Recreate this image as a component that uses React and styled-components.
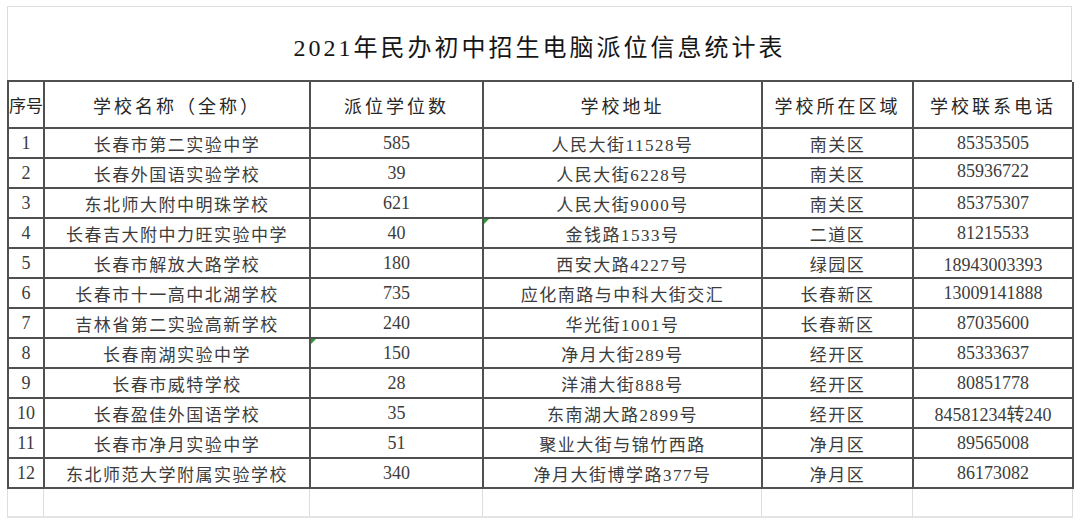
import * as React from "react";
import styled, {createGlobalStyle} from "styled-components";

const rows = [
  [1, "长春市第二实验中学", 585, "人民大街11528号", "南关区", "85353505"],
  [2, "长春外国语实验学校", 39, "人民大街6228号", "南关区", "85936722"],
  [3, "东北师大附中明珠学校", 621, "人民大街9000号", "南关区", "85375307"],
  [4, "长春吉大附中力旺实验中学", 40, "金钱路1533号", "二道区", "81215533"],
  [5, "长春市解放大路学校", 180, "西安大路4227号", "绿园区", "18943003393"],
  [6, "长春市十一高中北湖学校", 735, "应化南路与中科大街交汇", "长春新区", "13009141888"],
  [7, "吉林省第二实验高新学校", 240, "华光街1001号", "长春新区", "87035600"],
  [8, "长春南湖实验中学", 150, "净月大街289号", "经开区", "85333637"],
  [9, "长春市威特学校", 28, "洋浦大街888号", "经开区", "80851778"],
  [10, "长春盈佳外国语学校", 35, "东南湖大路2899号", "经开区", "84581234转240"],
  [11, "长春市净月实验中学", 51, "聚业大街与锦竹西路", "净月区", "89565008"],
  [12, "东北师范大学附属实验学校", 340, "净月大街博学路377号", "净月区", "86173082"],
];

const headers = ["序号", "学校名称（全称）", "派位学位数", "学校地址", "学校所在区域", "学校联系电话"];

// row 5 is a bit off in the source sheet
const valign = {"5-1": "bottom", "5-3": "bottom", "5-4": "top", "5-5": "bottom", "2-5": "top"};
// little green error markers from excel
const flagged = {"4-3": true, "8-2": true};

const GlobalStyle = createGlobalStyle`
  html, body {
    margin: 0;
    padding: 0;
    background: #fff;
  }
  body {
    font-family: "Liberation Serif", "Noto Sans CJK SC", serif;
  }
`;

const cols = "36px 266px 173px 279px 151px 160px";

const Page = styled.div`
  width: 1080px;
  height: 524px;
  padding: 6px 0 0 7px;
  box-sizing: border-box;
  overflow: hidden;
`;

const TitleBox = styled.div`
  width: 1065px;
  height: 74px;
  box-sizing: border-box;
  border: 1px solid #dcdcdc;
  border-bottom: none;
  display: flex;
  align-items: center;
  justify-content: center;
  padding-top: 4px;
  font-size: 24px;
  letter-spacing: 3px;
  color: #161616;
`;

const Sheet = styled.div`
  display: grid;
  grid-template-columns: ${cols};
  width: 1065px;
  border-top: 2px solid #505050;
  border-left: 2px solid #505050;
  box-sizing: border-box;
`;

const Cell = styled.div`
  position: relative;
  height: ${p => p.$head ? "47px" : "30px"};
  box-sizing: border-box;
  border-right: 2px solid #505050;
  border-bottom: 2px solid #505050;
  display: flex;
  justify-content: center;
  align-items: ${p => p.$v === "top" ? "flex-start" : p.$v === "bottom" ? "flex-end" : "center"};
  padding: ${p => p.$v === "top" ? "2px 0 0" : p.$v === "bottom" ? "0 0 1px" : "0"};
  overflow: hidden;
  white-space: nowrap;
  font-size: ${p => p.$head ? "18px" : p.$num ? "18px" : "17px"};
  letter-spacing: ${p => p.$head ? "3px" : p.$num ? "0" : "1.5px"};
  color: ${p => p.$head ? "#262626" : "#3c3c3c"};

  &.narrow {
    font-size: 17px;
    letter-spacing: 0;
  }
`;

const Flag = styled.span`
  position: absolute;
  top: 0;
  left: 0;
  width: 0;
  height: 0;
  border-top: 5px solid #2f9a3a;
  border-right: 5px solid transparent;
`;

const EmptyRow = styled.div`
  display: grid;
  grid-template-columns: ${cols};
  width: 1065px;
  height: 29px;
  border-left: 1px solid #dedede;
  box-sizing: border-box;
`;

const EmptyCell = styled.div`
  border-right: 1px solid #dedede;
  border-bottom: 2px solid #e4e4e4;
`;

const App = () => {
  return (
    <>
      <GlobalStyle/>
      <Page>
        <TitleBox>2021年民办初中招生电脑派位信息统计表</TitleBox>
        <Sheet>
          {headers.map((h, i) => (
            <Cell key={h} $head className={i === 0 ? "narrow" : ""}>{h}</Cell>
          ))}
          {rows.map((row) =>
            row.map((val, i) => (
              <Cell
                key={row[0] + "-" + i}
                $num={i === 0 || i === 2 || i === 5}
                $v={valign[row[0] + "-" + i]}
              >
                {flagged[row[0] + "-" + i] && <Flag/>}
                {val}
              </Cell>
            ))
          )}
        </Sheet>
        <EmptyRow>
          {headers.map((h) => <EmptyCell key={h}/>)}
        </EmptyRow>
      </Page>
    </>
  );
};

export default App;
